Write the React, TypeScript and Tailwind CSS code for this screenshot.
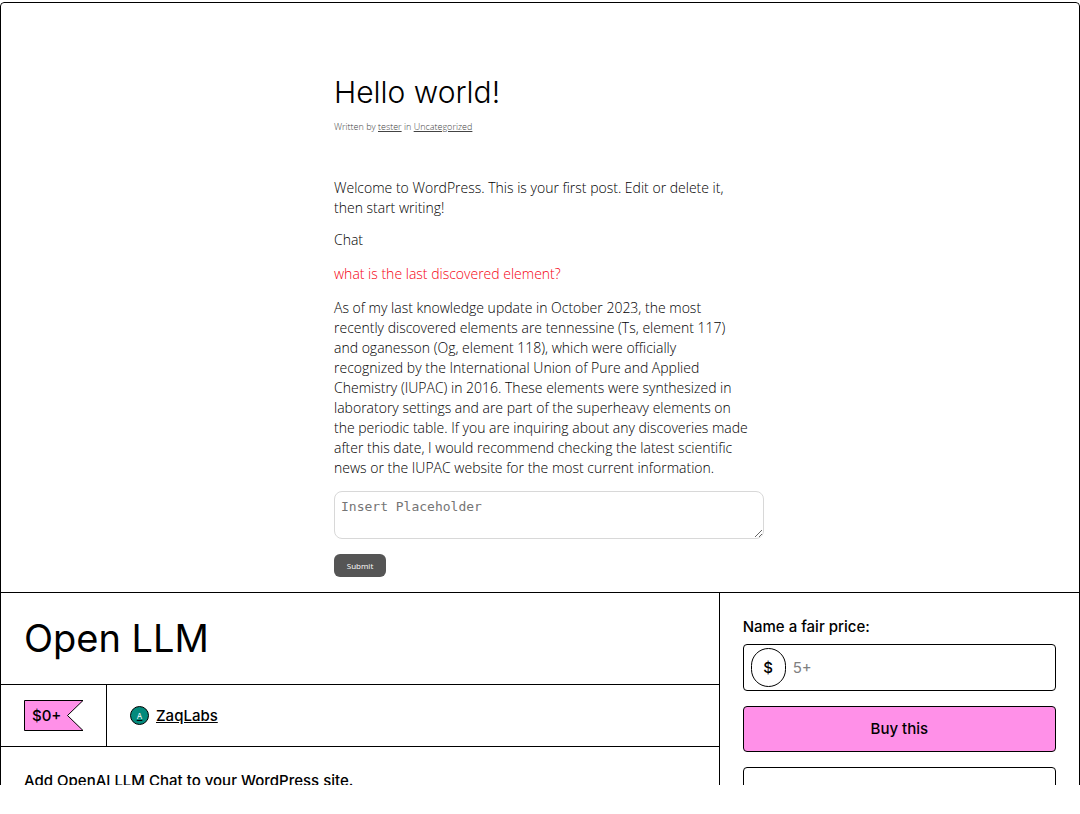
const sans = "font-['Inter','Liberation_Sans',sans-serif]";

function PreviewPost() {
  return (
    <article className="mx-auto w-full max-w-[448px] pt-[69px] pb-[15px] pl-[18px] font-['Open_Sans',sans-serif] text-sm leading-5 font-light text-black">
      <h1 className={`${sans} text-[30px] leading-10 font-light`}>Hello world!</h1>
      <p className="mt-[9px] text-[9px] leading-3 text-[#444]">
        Written by <a href="#tester" className="underline">tester</a> in{" "}
        <a href="#uncategorized" className="underline">Uncategorized</a>
      </p>
      <p className="mt-[45px]">
        Welcome to WordPress. This is your first post. Edit or delete it,
        <br />
        then start writing!
      </p>
      <p className="mt-3">Chat</p>
      <p className="mt-3.5 text-[#f50010]">what is the last discovered element?</p>
      <p className="mt-3.5 whitespace-nowrap">
        As of my last knowledge update in October 2023, the most
        <br />
        recently discovered elements are tennessine (Ts, element 117)
        <br />
        and oganesson (Og, element 118), which were officially
        <br />
        recognized by the International Union of Pure and Applied
        <br />
        Chemistry (IUPAC) in 2016. These elements were synthesized in
        <br />
        laboratory settings and are part of the superheavy elements on
        <br />
        the periodic table. If you are inquiring about any discoveries made
        <br />
        after this date, I would recommend checking the latest scientific
        <br />
        news or the IUPAC website for the most current information.
      </p>
      <form onSubmit={(e) => e.preventDefault()}>
        <textarea
          aria-label="Chat message"
          placeholder="Insert Placeholder"
          className="mt-[13px] block h-12 w-full rounded-lg border border-[#d8d8d8] px-1.5 py-1.5 font-['DejaVu_Sans_Mono',monospace] text-[13px] leading-[18px] font-normal placeholder:text-[#757575] focus:outline-none"
        />
        <button className="mt-[15px] block h-[23px] w-[52px] rounded-md bg-[#555] text-[8px] leading-3 font-medium text-white">
          Submit
        </button>
      </form>
    </article>
  );
}

function PriceRibbon() {
  return (
    <div className="relative flex h-[31px] w-[60px] items-center pl-2">
      <svg viewBox="0 0 60 31" className="absolute inset-0 size-full" aria-hidden="true">
        <path d="M.5 .5H59L43.5 15.5L59 30.5H.5Z" fill="#ff90e8" stroke="#000" />
      </svg>
      <span className="relative">$0+</span>
    </div>
  );
}

export default function App() {
  return (
    <div className={`${sans} h-screen bg-white pt-0.5 pb-[29px] text-black`}>
      <main className="h-full overflow-hidden rounded-t">
        <div className="rounded-t border border-black">
          <section className="border-b border-black">
            <PreviewPost />
          </section>
          <div className="grid grid-cols-[2fr_1fr]">
            <section className="border-r border-black">
              <header className="border-b border-black px-[23px] pt-5 pb-[21px]">
                <h1 className="text-[38px] leading-[50px]">Open LLM</h1>
              </header>
              <div className="flex border-b border-black text-[15px] leading-5 font-medium">
                <div className="border-r border-black py-[15px] pr-[22px] pl-[23px]">
                  <PriceRibbon />
                </div>
                <a href="#zaqlabs" className="flex items-center gap-[7px] px-[23px] underline">
                  <span className="flex size-[19px] items-center justify-center rounded-full border border-black bg-[#038a7c] text-[8px] leading-3 font-normal text-white">
                    A
                  </span>
                  ZaqLabs
                </a>
              </div>
              <p className="px-[23px] py-6 text-[15px] leading-5 font-medium">
                Add OpenAI LLM Chat to your WordPress site.
              </p>
            </section>
            <section className="px-[23px] pt-6 text-[15px] leading-5 font-medium">
              <label htmlFor="price">Name a fair price:</label>
              <div className="mt-[7px] flex h-[47px] items-center gap-[7px] rounded border border-black px-[7px]">
                <span className="flex h-[39px] w-[35px] items-center justify-center rounded-full border border-black">$</span>
                <input
                  id="price"
                  placeholder="5+"
                  className="min-w-0 flex-1 font-normal placeholder:text-[#808080] focus:outline-none"
                />
              </div>
              <button className="mt-[15px] h-[46px] w-full rounded border border-black bg-[#ff90e8]">Buy this</button>
              <div className="mt-[15px] h-24 rounded border border-black"></div>
            </section>
          </div>
        </div>
      </main>
    </div>
  );
}
